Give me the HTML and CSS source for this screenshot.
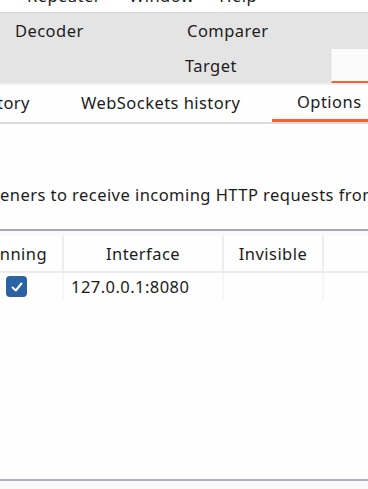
FILE: index.html
```html
<!DOCTYPE html>
<html lang="en">
<head>
    <meta charset="UTF-8">
    <meta name="viewport" content="width=device-width, initial-scale=1.0">
    <title>Proxy Options</title>
    <link rel="stylesheet" href="styles.css">
</head>
<body>
    <div class="menubar">
        <span class="menu-item repeater">Repeater</span>
        <span class="menu-item window">Window</span>
        <span class="menu-item help">Help</span>
    </div>

    <div class="tool-tabs">
        <div class="tab-row">
            <div class="tool-tab decoder">Decoder</div>
            <div class="tool-tab comparer">Comparer</div>
        </div>
        <div class="tab-row">
            <div class="tool-tab target">Target</div>
            <div class="tool-tab selected"></div>
        </div>
    </div>

    <div class="sub-tabs">
        <div class="sub-tab history">tory</div>
        <div class="sub-tab websockets">WebSockets history</div>
        <div class="sub-tab active">Options</div>
    </div>

    <div class="content">
        <p class="intro">eners to receive incoming HTTP requests from</p>

        <div class="listeners">
            <div class="row head">
                <div class="cell running">nning</div>
                <div class="cell iface">Interface</div>
                <div class="cell invisible">Invisible</div>
                <div class="cell rest"></div>
            </div>
            <div class="row">
                <div class="cell running"><span class="check">
                    <svg width="14" height="14" viewBox="0 0 14 14"><path d="M2.5 7.5 L5.8 10.5 L11.5 3.5" fill="none" stroke="#fff" stroke-width="2" stroke-linecap="round" stroke-linejoin="round"/></svg>
                </span></div>
                <div class="cell iface value">127.0.0.1:8080</div>
                <div class="cell invisible"></div>
                <div class="cell rest"></div>
            </div>
        </div>
    </div>

    <div class="footer"></div>
</body>
</html>
```

FILE: styles.css
```css
body {
    margin: 0;
    background: #fff;
    color: #1c1c1c;
    font-family: "Noto Sans", "Open Sans", sans-serif;
    font-size: 16.5px;
    letter-spacing: 0.45px;
    width: 368px;
    height: 489px;
    overflow: hidden;
    display: flex;
    flex-direction: column;
}
.menubar {
    height: 12px;
    display: flex;
    align-items: flex-end;
    overflow: hidden;
    border-bottom: 1px solid #d6d6d6;
    white-space: nowrap;
}
.menu-item {
    line-height: 22px;
    margin-bottom: 5px;
    flex: none;
}
.repeater { margin-left: 27px; }
.window { margin-left: 28px; }
.help { margin-left: 25px; }
.tool-tabs {
    background: #e4e4e4;
    height: 70px;
}
.tab-row {
    display: flex;
    height: 35px;
}
.tool-tab {
    line-height: 35px;
    white-space: nowrap;
}
.decoder {
    width: 187px;
    padding-left: 15px;
    box-sizing: border-box;
}
.target { margin-left: 185px; }
.tool-tab.selected {
    margin-left: auto;
    width: 37px;
    margin-top: 1px;
    background: #fbfbfb;
    border-left: 1px solid #f0f0f0;
    border-bottom: 2px solid #f26232;
    box-sizing: border-box;
}
.sub-tabs {
    display: flex;
    height: 37px;
    border-top: 2px solid #efefef;
    border-bottom: 2px solid #dcdcdc;
    background: #fefefe;
    white-space: nowrap;
}
.sub-tab {
    line-height: 35px;
}
.history {
    width: 84px;
    margin-left: -3px;
    flex: none;
}
.websockets {
    width: 191px;
    flex: none;
}
.sub-tab.active {
    padding-left: 25px;
    border-bottom: 3px solid #f26232;
    line-height: 34px;
    flex: 1;
}
.content {
    flex: 1;
    background: #fefefe;
}
.intro {
    margin: 60px 0 0;
    line-height: 22px;
    white-space: nowrap;
}
.listeners {
    margin-top: 23px;
    border-top: 2px solid #aaa7b8;
}
.row {
    display: flex;
    height: 27px;
}
.row.head {
    border-top: 5px solid #fafafa;
    border-bottom: 2px solid #ececec;
    box-sizing: border-box;
    height: 42px;
}
.cell {
    box-sizing: border-box;
    border-right: 2px solid #eeeeee;
    display: flex;
    align-items: center;
    white-space: nowrap;
}
.head .cell {
    justify-content: center;
}
.row:not(.head) .cell {
    border-right-color: #f6f6f6;
}
.running {
    width: 64px;
    padding-right: 15px;
}
.head .running {
    justify-content: flex-end;
}
.iface { width: 160px; }
.value { padding-left: 7px; }
.invisible { width: 100px; }
.rest { flex: 1; border-right: none; }
.check {
    width: 21px;
    height: 21px;
    border-radius: 4px;
    background: #2b62a3;
    display: flex;
    align-items: center;
    justify-content: center;
    margin-left: 6px;
    margin-right: auto;
}
.footer {
    height: 8px;
    border-top: 2px solid #b3b0c2;
    background: #fafafa;
}
```
